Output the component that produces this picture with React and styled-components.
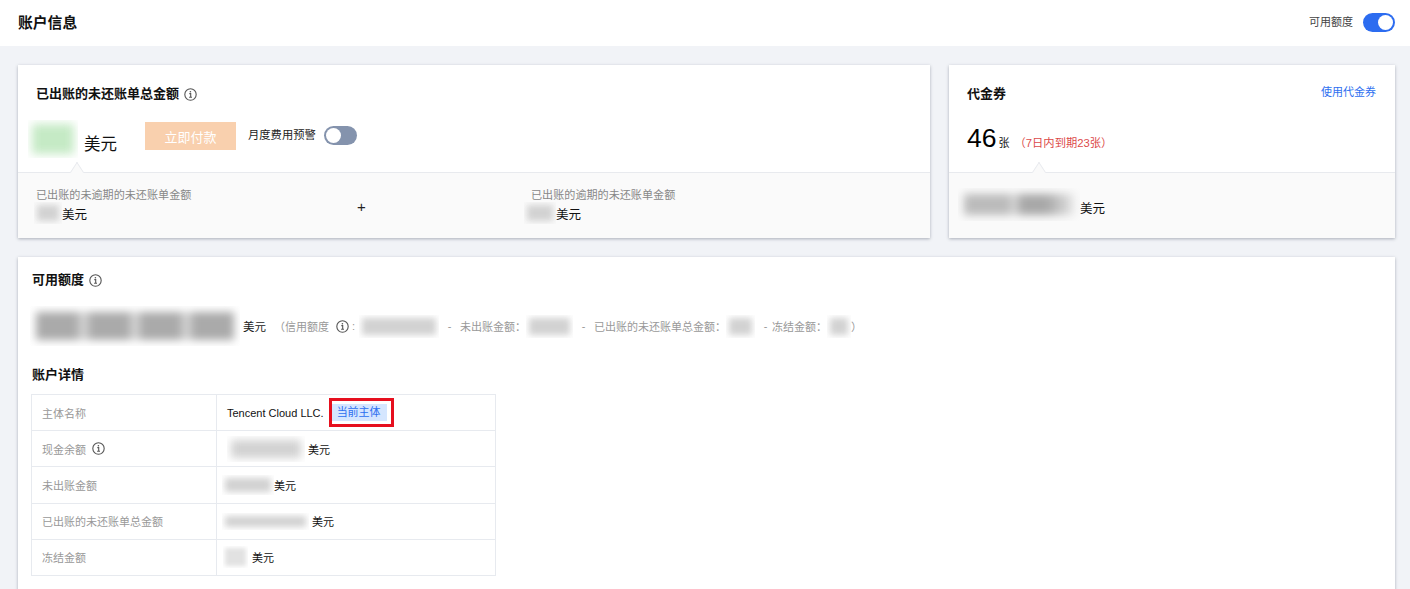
import React from "react";
import styled, { createGlobalStyle } from "styled-components";

const Global = createGlobalStyle`
  html, body { margin:0; padding:0; height:589px; overflow:hidden; background:#f1f3f7; }
  body { font-family:"Liberation Sans","Noto Sans CJK SC",sans-serif; font-size:11px; color:#000; }
  * { box-sizing:border-box; }
`;

const Header = styled.div`
  height:46px; background:#fff; padding:0 15px 0 18px;
  display:flex; align-items:center; justify-content:space-between;
`;
const PageTitle = styled.div`
  font-size:14.8px; font-weight:700; color:#111; margin-top:-4px;
`;
const HeaderRight = styled.div`
  display:flex; align-items:center; gap:10px; color:#444; margin-top:-1px;
`;
const ToggleLabel = styled.span`
  margin-top:-3px;
`;
const Toggle = styled.span`
  width:${p => p.$w}px; height:19px; border-radius:10px; padding:2px;
  background:${p => (p.$on ? "#2c6cf0" : "#8493ad")};
  display:flex; justify-content:${p => (p.$on ? "flex-end" : "flex-start")};
  &::after { content:""; width:15px; height:15px; border-radius:50%; background:#fff; }
`;

const Content = styled.div`
  padding:19px 15px 0 18px; display:flex; flex-direction:column; gap:19px;
`;
const TopRow = styled.div`
  display:grid; grid-template-columns:912px 446px; column-gap:19px;
`;
const Card = styled.div`
  background:#fff; box-shadow:0 1px 3px rgba(40,50,70,.35);
  display:flex; flex-direction:column;
`;
const CardMain = styled.div`
  height:107px; padding:20px 19px 0 18px; position:relative;
  &::after {
    content:""; position:absolute; left:${p => p.$caret}px; bottom:-6px; width:11px; height:11px;
    background:#fafafa; border:1px solid #e8eaee; border-right:0; border-bottom:0;
    transform:rotate(45deg) skew(12deg,12deg);
  }
`;
const TitleRow = styled.div`
  display:flex; align-items:center; justify-content:space-between; height:18px;
`;
const TitleGroup = styled.div`
  display:flex; align-items:center; gap:5px;
`;
const Heading = styled.div`
  font-size:13px; font-weight:700; color:#111; line-height:18px;
`;
const Link = styled.a`
  color:#2d6ff0; font-size:11px; margin-top:-7px;
`;
const Icon = styled.svg`
  width:13px; height:13px; display:block; flex:none;
`;
const InfoIcon = () => (
  <Icon viewBox="0 0 13 13" fill="none" stroke="#555" strokeWidth="1.1">
    <circle cx="6.5" cy="6.5" r="5.7" />
    <path d="M5.3 5.6h1.4v3.6M5.1 9.3h2.9" />
    <circle cx="6.4" cy="3.7" r=".8" fill="#555" stroke="none" />
  </Icon>
);

const Blur = styled.span`
  display:inline-block; flex:none; position:relative; overflow:hidden;
  width:${p => p.$w}px; height:${p => p.$h}px;
  background:${p => p.$bg || "#fff"};
  &::before {
    content:""; position:absolute; inset:${p => p.$inset ?? 6}px;
    background:${p => p.$tone || "#d2d2d2"}; filter:blur(${p => p.$blur ?? 4}px);
  }
`;

const PayRow = styled.div`
  display:flex; align-items:flex-start; margin:17px 0 0 -8px;
`;
const BigUnit = styled.span`
  font-size:16.5px; color:#111; margin:14px 0 0 6px; line-height:20px;
`;
const PayButton = styled.button`
  width:91px; height:28px; border:0; background:#f9d0ae; color:#fff; font:inherit; font-size:13px;
  margin:2px 0 0 28px; padding:0;
`;
const AlertGroup = styled.div`
  display:flex; align-items:center; gap:8px; margin:6px 0 0 12px; color:#222; font-size:11.3px;
`;

const CardFoot = styled.div`
  flex:none; height:66px; background:#fafafa; border-top:1px solid #e8eaee;
  padding:15px 19px 0 18px;
`;
const FootGrid = styled.div`
  display:grid; grid-template-columns:495px 1fr;
`;
const FootCell = styled.div`
  position:relative; display:flex; flex-direction:column;
`;
const FootLabel = styled.div`
  color:#888; font-size:11.1px; line-height:14px;
`;
const AmountLine = styled.div`
  display:flex; align-items:center; font-size:12.5px; color:#111; margin-left:${p => p.$ml || 0}px;
`;
const Plus = styled.span`
  position:absolute; left:321px; top:10px; font-size:15px; color:#222; line-height:18px;
`;

const CountRow = styled.div`
  display:flex; align-items:baseline; margin-top:18px; color:#111;
`;
const Count = styled.span`
  font-size:26.5px; line-height:34px; color:#000;
`;
const CountUnit = styled.span`
  font-size:11px; margin:0 5px 0 2px;
`;
const Expire = styled.span`
  color:#dc4a4a; font-size:11.3px;
`;

const Lower = styled(Card)`
  padding:14px 14px 40px; min-height:360px;
`;
const CreditRow = styled.div`
  display:flex; align-items:center; height:40px; margin:17px 0 0 -2px; color:#999; font-size:11px;
`;
const CreditUnit = styled.span`
  color:#222; margin:0 8px 0 3px; font-size:11.5px;
`;
const Paren = styled.span`
  display:flex; align-items:center; gap:7px; margin-right:3px;
`;
const Sep = styled.span`
  margin:0 ${p => p.$r ?? 8}px 0 8px; width:5px; text-align:center;
`;
const Colon = styled.span`
  margin-right:${p => p.$mr ?? 0}px;
`;
const DetailTitle = styled(Heading)`
  margin:20px 0 10px;
`;
const Table = styled.div`
  width:465px; margin-left:-1px; border:1px solid #e7eaef; border-bottom:0;
`;
const Row = styled.div`
  display:grid; grid-template-columns:185px 1fr; height:36.2px; border-bottom:1px solid #e7eaef;
`;
const LabelCell = styled.div`
  display:flex; align-items:center; gap:6px; padding-left:10px; color:#999; border-right:1px solid #e7eaef;
`;
const ValueCell = styled.div`
  display:flex; align-items:center; padding-left:${p => p.$pl ?? 10}px; color:#111;
`;
const Mark = styled.span`
  display:inline-flex; margin-left:5px; border:3px solid #e60f1e; padding:3px 4px 3px 0;
`;
const Tag = styled.span`
  padding:0 5px; height:17px; line-height:17px; width:55px; background:#d5e6ff; color:#2d6ff0; white-space:nowrap;
`;
const Unit = styled.span`
  margin-left:${p => p.$ml || 0}px; margin-top:${p => p.$mt || 0}px;
`;

const amountBlobs = "linear-gradient(90deg,#aaa 0 20%,#ddd 24%,#aaa 28% 46%,#ddd 50%,#aaa 54% 72%,#ddd 76%,#aaa 80%)";
const couponBlobs = "linear-gradient(90deg,#bbb 0 40%,#ddd 46%,#a8a8a8 52% 75%,#ccc 90%,#e8e8e8)";

export default function App() {
  return (
    <>
      <Global />
      <Header>
        <PageTitle>账户信息</PageTitle>
        <HeaderRight>
          <ToggleLabel>可用额度</ToggleLabel>
          <Toggle $on $w={32} />
        </HeaderRight>
      </Header>
      <Content>
        <TopRow>
          <Card>
            <CardMain $caret={53}>
              <TitleRow>
                <TitleGroup>
                  <Heading>已出账的未还账单总金额</Heading>
                  <InfoIcon />
                </TitleGroup>
              </TitleRow>
              <PayRow>
                <Blur $w={50} $h={38} $tone="#c5eac5" $inset={4} $blur={5} />
                <BigUnit>美元</BigUnit>
                <PayButton>立即付款</PayButton>
                <AlertGroup>
                  <ToggleLabel>月度费用预警</ToggleLabel>
                  <Toggle $w={33} />
                </AlertGroup>
              </PayRow>
            </CardMain>
            <CardFoot>
              <FootGrid>
                <FootCell>
                  <FootLabel>已出账的未逾期的未还账单金额</FootLabel>
                  <AmountLine $ml={-2}>
                    <Blur $w={28} $h={22} $bg="#fafafa" $inset={3} $blur={3} />
                    美元
                  </AmountLine>
                  <Plus>+</Plus>
                </FootCell>
                <FootCell>
                  <FootLabel>已出账的逾期的未还账单金额</FootLabel>
                  <AmountLine $ml={-7}>
                    <Blur $w={32} $h={22} $bg="#fafafa" $inset={3} $blur={3} />
                    美元
                  </AmountLine>
                </FootCell>
              </FootGrid>
            </CardFoot>
          </Card>
          <Card>
            <CardMain $caret={84}>
              <TitleRow>
                <Heading>代金券</Heading>
                <Link>使用代金券</Link>
              </TitleRow>
              <CountRow>
                <Count>46</Count>
                <CountUnit>张</CountUnit>
                <Expire>（7日内到期23张）</Expire>
              </CountRow>
            </CardMain>
            <CardFoot>
              <AmountLine $ml={-9}>
                <Blur $w={122} $h={33} $bg="#fafafa" $inset={6} $blur={4} $tone={couponBlobs} />
                <Unit $mt={5}>美元</Unit>
              </AmountLine>
            </CardFoot>
          </Card>
        </TopRow>
        <Lower>
          <TitleGroup>
            <Heading>可用额度</Heading>
            <InfoIcon />
          </TitleGroup>
          <CreditRow>
            <Blur $w={210} $h={40} $inset={6} $blur={4} $tone={amountBlobs} />
            <CreditUnit>美元</CreditUnit>
            <Paren>
              （信用额度
              <InfoIcon />
            </Paren>
            <Colon $mr={4}>:</Colon>
            <Blur $w={80} $h={23} $inset={3} $blur={3} />
            <Sep>-</Sep>
            未出账金额：
            <Blur $w={47} $h={23} $inset={3} $blur={3} />
            <Sep>-</Sep>
            已出账的未还账单总金额：
            <Blur $w={29} $h={23} $inset={3} $blur={3} />
            <Sep $r={4}>-</Sep>
            冻结金额：
            <Blur $w={24} $h={23} $inset={3} $blur={3} />
            ）
          </CreditRow>
          <DetailTitle>账户详情</DetailTitle>
          <Table>
            <Row>
              <LabelCell>主体名称</LabelCell>
              <ValueCell>
                Tencent Cloud LLC.
                <Mark>
                  <Tag>当前主体</Tag>
                </Mark>
              </ValueCell>
            </Row>
            <Row>
              <LabelCell>
                现金余额
                <InfoIcon />
              </LabelCell>
              <ValueCell>
                <Blur $w={78} $h={26} $inset={4} $blur={4} />
                <Unit $ml={3}>美元</Unit>
              </ValueCell>
            </Row>
            <Row>
              <LabelCell>未出账金额</LabelCell>
              <ValueCell $pl={5}>
                <Blur $w={52} $h={20} $inset={3} $blur={3} />
                美元
              </ValueCell>
            </Row>
            <Row>
              <LabelCell>已出账的未还账单总金额</LabelCell>
              <ValueCell $pl={5}>
                <Blur $w={87} $h={17} $inset={3} $blur={3} />
                <Unit $ml={3}>美元</Unit>
              </ValueCell>
            </Row>
            <Row>
              <LabelCell>冻结金额</LabelCell>
              <ValueCell $pl={6}>
                <Blur $w={25} $h={22} $inset={2} $blur={2} $tone="#e2e2e2" />
                <Unit $ml={4}>美元</Unit>
              </ValueCell>
            </Row>
          </Table>
        </Lower>
      </Content>
    </>
  );
}
